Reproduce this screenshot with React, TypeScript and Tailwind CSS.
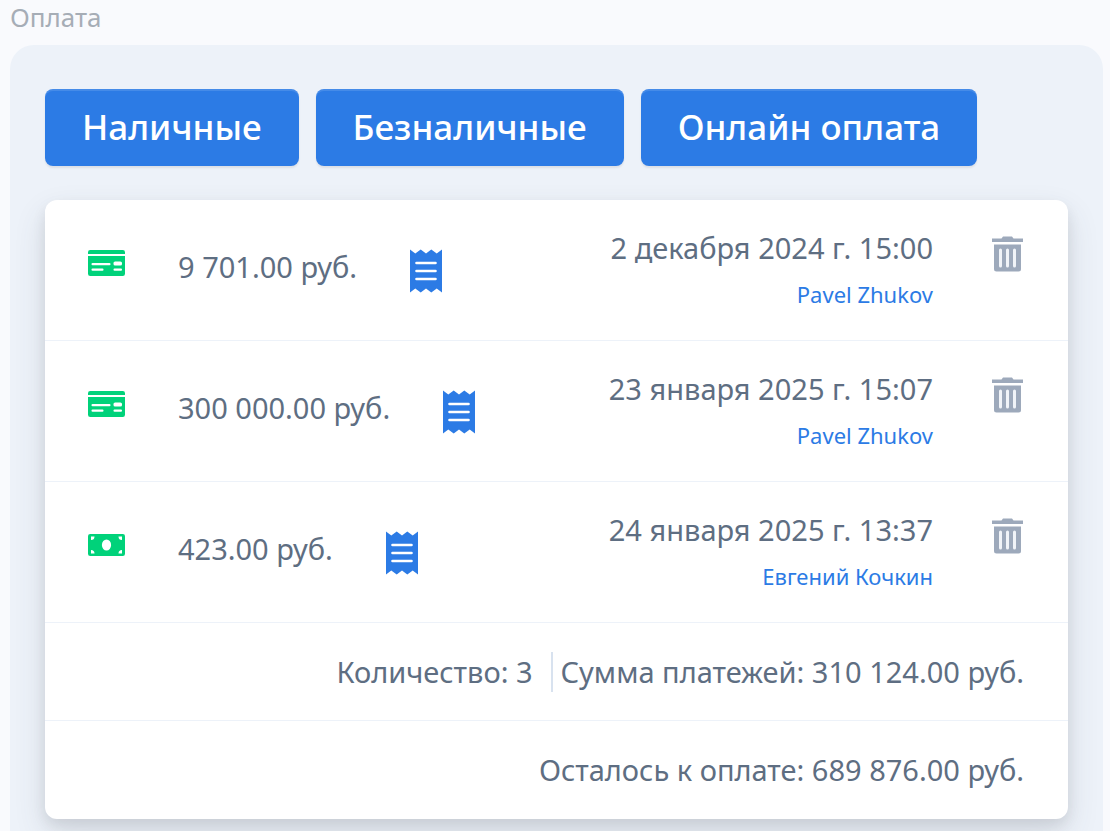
import React from 'react';

type Payment = {
  id: number;
  kind: 'card' | 'cash';
  amount: string;
  date: string;
  author: string;
};

const payments: Payment[] = [
  { id: 1, kind: 'card', amount: '9 701.00 руб.', date: '2 декабря 2024 г. 15:00', author: 'Pavel Zhukov' },
  { id: 2, kind: 'card', amount: '300 000.00 руб.', date: '23 января 2025 г. 15:07', author: 'Pavel Zhukov' },
  { id: 3, kind: 'cash', amount: '423.00 руб.', date: '24 января 2025 г. 13:37', author: 'Евгений Кочкин' },
];

const methods = ['Наличные', 'Безналичные', 'Онлайн оплата'];

function CardIcon() {
  return (
    <svg width="37" height="26" viewBox="0 0 37 26" aria-hidden="true">
      <path fill="#00d27a" d="M2.2 0H34.8Q37 0 37 2.2V4H0V2.2Q0 0 2.2 0ZM0 6H37V23.8Q37 26 34.8 26H2.2Q0 26 0 23.8Z" />
      <rect x="3.5" y="13" width="19" height="2.2" rx="1" fill="#fff" />
      <rect x="3.5" y="18.5" width="12" height="2.2" rx="1" fill="#fff" />
      <rect x="25.5" y="11.5" width="8.5" height="4" rx="1.6" fill="#fff" />
      <rect x="25.5" y="18.5" width="8.5" height="2.2" rx="1" fill="#fff" />
    </svg>
  );
}

function CashIcon() {
  return (
    <svg width="37" height="22" viewBox="0 0 37 22" aria-hidden="true">
      <rect width="37" height="22" rx="2.2" fill="#00d27a" />
      <ellipse cx="18.5" cy="11" rx="4.6" ry="5.5" fill="#fff" />
      <path
        fill="#fff"
        d="M3 2.500H6.500A3.500 3.500 0 0 1 3 6ZM34 2.500V6A3.500 3.500 0 0 1 30.500 2.500ZM3 19.500V16A3.500 3.500 0 0 1 6.500 19.500ZM34 19.500H30.500A3.500 3.500 0 0 1 34 16Z"
      />
    </svg>
  );
}

function ReceiptIcon() {
  return (
    <svg width="32" height="44" viewBox="0 0 32 44" aria-hidden="true">
      <path
        fill="#2c7be5"
        d="M0 0.500L5.300 4.500L10.700 0.500L16 4.500L21.300 0.500L26.700 4.500L32 0.500V43.500L26.700 39.500L21.300 43.500L16 39.500L10.700 43.500L5.300 39.500L0 43.500Z"
      />
      <path stroke="#fff" strokeWidth="2.6" strokeLinecap="round" d="M6.500 14H25.500M6.500 22H25.500M6.500 30H25.500" />
    </svg>
  );
}

function TrashIcon() {
  return (
    <svg width="31" height="36" viewBox="0 0 31 36" aria-hidden="true">
      <path fill="#9da9bb" d="M0 2.5H9.500L11 0.500H20L21.500 2.500H31V6H0Z" />
      <path fill="#9da9bb" d="M2 8.500H29V33Q29 35.500 26.500 35.500H4.500Q2 35.500 2 33Z" />
      <path stroke="#f1f4f8" strokeWidth="3" strokeLinecap="round" d="M8.500 14V30M15.500 14V30M22.500 14V30" />
    </svg>
  );
}

function PaymentRow({ payment }: { payment: Payment }) {
  return (
    <li className="flex items-start justify-between border-b border-[#edf2f9] py-6 pr-[45px] pl-[43px]">
      <div className="flex pt-[5px]">
        <span className="flex h-20 w-[90px] items-center pb-3">
          {payment.kind === 'card' ? <CardIcon /> : <CashIcon />}
        </span>
        <span className="flex h-20 items-center gap-[53px] pt-1">
          <span className="pb-2">{payment.amount}</span>
          <button type="button" aria-label="Чек" className="cursor-pointer">
            <ReceiptIcon />
          </button>
        </span>
      </div>
      <div className="flex gap-[59px]">
        <div className="text-right">
          <div className="leading-[48px]">{payment.date}</div>
          <a href="#author" className="block text-[22px] leading-[44px] text-[#2c7be5]">
            {payment.author}
          </a>
        </div>
        <button type="button" aria-label="Удалить платёж" className="mt-3 h-9 cursor-pointer">
          <TrashIcon />
        </button>
      </div>
    </li>
  );
}

export default function App() {
  return (
    <main className="min-h-screen bg-[#f9fafd] pr-[7px] pl-[10px] font-['Noto_Sans',sans-serif] text-[29px] text-[#5e6e82]">
      <h1 className="h-[45px] text-[26px] leading-[34px] text-[#a6adb6]">Оплата</h1>
      <section className="rounded-t-[24px] bg-[#edf2f9] px-[35px] pt-11 pb-3">
        <div className="flex flex-wrap gap-[17px]">
          {methods.map((method) => (
            <button
              key={method}
              type="button"
              className="h-[77px] cursor-pointer rounded-[8px] bg-[#2c7be5] px-[37px] text-[35px] font-medium text-white shadow-[inset_0_2px_0_rgba(255,255,255,0.12),0_2px_2px_rgba(0,0,0,0.075)]"
            >
              {method}
            </button>
          ))}
        </div>
        <div className="mt-[34px] rounded-[12px] bg-white shadow-[0_14px_32px_rgba(65,69,88,0.14),0_6px_14px_rgba(0,0,0,0.08)]">
          <ul>
            {payments.map((payment) => (
              <PaymentRow key={payment.id} payment={payment} />
            ))}
          </ul>
          <div className="flex h-[98px] items-center justify-end border-b border-[#edf2f9] px-11">
            <span className="pr-[18px]">Количество: 3</span>
            <span className="border-l-2 border-[#d8e2ef] pl-2 leading-[40px]">Сумма платежей: 310 124.00 руб.</span>
          </div>
          <div className="flex h-[98px] items-center justify-end px-11">Осталось к оплате: 689 876.00 руб.</div>
        </div>
      </section>
    </main>
  );
}
